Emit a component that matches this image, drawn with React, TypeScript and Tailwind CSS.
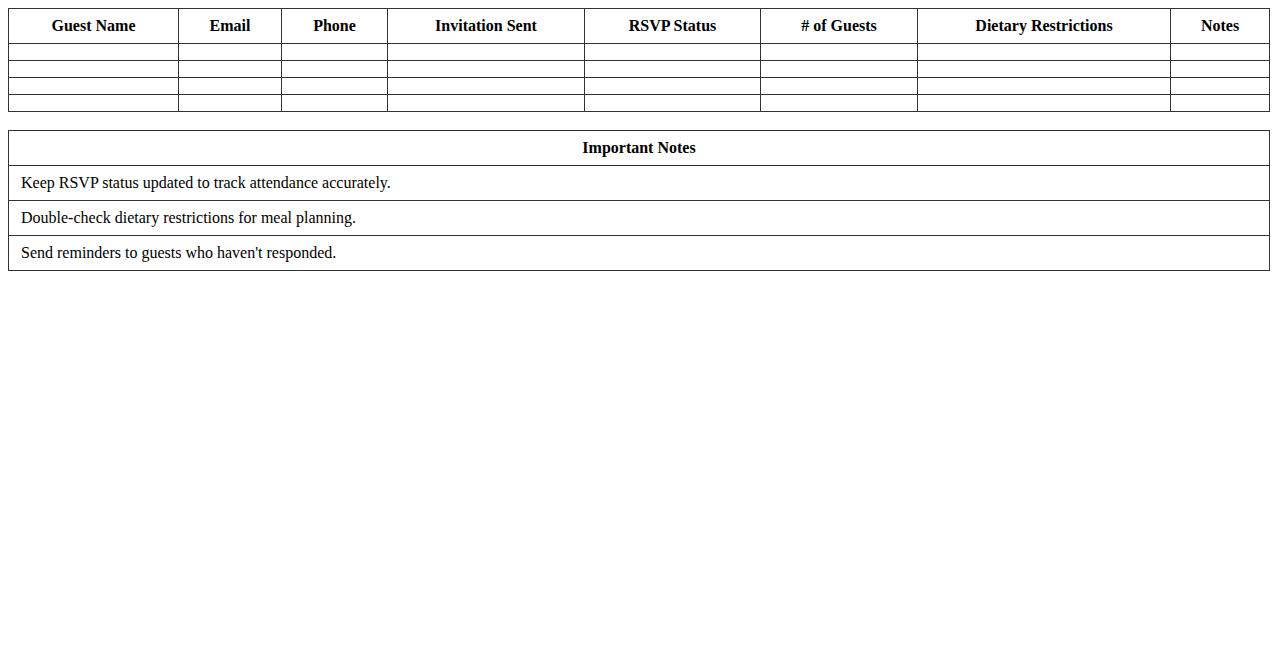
import React from "react";

const cols = [
  { name: "Guest Name", w: 170 },
  { name: "Email", w: 103 },
  { name: "Phone", w: 106 },
  { name: "Invitation Sent", w: 197 },
  { name: "RSVP Status", w: 176 },
  { name: "# of Guests", w: 157 },
  { name: "Dietary Restrictions", w: 253 },
  { name: "Notes", w: 99 },
];

const notes = [
  "Keep RSVP status updated to track attendance accurately.",
  "Double-check dietary restrictions for meal planning.",
  "Send reminders to guests who haven't responded.",
];

export default function App() {
  return (
    <div className="p-2 bg-white text-black text-[16px] leading-[18px]" style={{ fontFamily: '"Liberation Serif", "Times New Roman", serif' }}>
      <table className="w-full table-fixed border-collapse border border-[#333] mb-[18px]">
        <colgroup>
          {cols.map((c) => (
            <col key={c.name} style={{ width: c.w }} />
          ))}
        </colgroup>
        <thead>
          <tr>
            {cols.map((c) => (
              <th key={c.name} className="border border-[#333] p-2 font-bold text-center">
                {c.name}
              </th>
            ))}
          </tr>
        </thead>
        <tbody>
          {[0, 1, 2, 3].map((r) => (
            <tr key={r}>
              {cols.map((c) => (
                <td key={c.name} className="border border-[#333] p-2"></td>
              ))}
            </tr>
          ))}
        </tbody>
      </table>
      <table className="w-full border-collapse border border-[#333]">
        <thead>
          <tr>
            <th className="border border-[#333] py-2 px-3 font-bold text-center">Important Notes</th>
          </tr>
        </thead>
        <tbody>
          {notes.map((n) => (
            <tr key={n}>
              <td className="border border-[#333] py-2 px-3 text-left">{n}</td>
            </tr>
          ))}
        </tbody>
      </table>
    </div>
  );
}
